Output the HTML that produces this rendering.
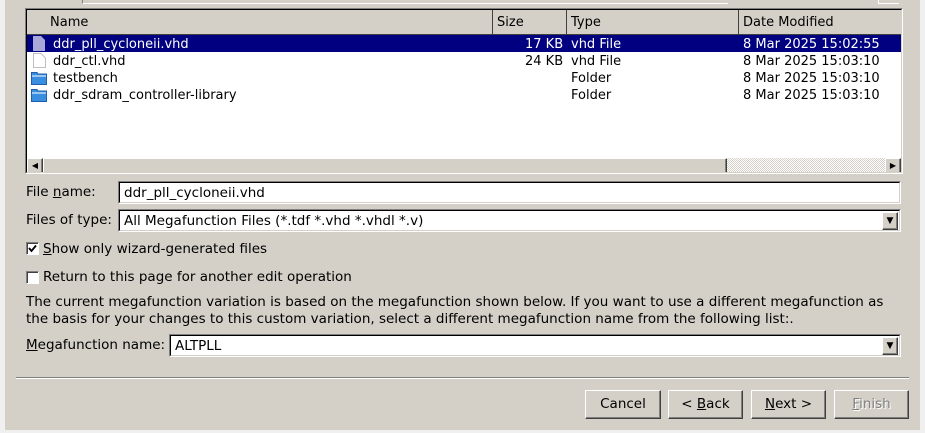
<!DOCTYPE html><html><head><style>
body{margin:0;width:925px;height:433px;background:#f0f0f0;position:relative;overflow:hidden;font-family:"DejaVu Sans","Liberation Sans",sans-serif;font-size:13.5px;color:#000}
.a{position:absolute}
.bg{left:5px;top:0;width:915px;height:430px;background:#d4d0c8}
.sunk{border-top:1px solid #808080;border-left:1px solid #808080;border-right:1px solid #fff;border-bottom:1px solid #fff;box-sizing:border-box}
.in{border-top:1px solid #000;border-left:1px solid #000;border-right:1px solid #d4d0c8;border-bottom:1px solid #d4d0c8;box-sizing:border-box;width:100%;height:100%;background:#fff}
.hd{background:#d4d0c8;border-right:1px solid #404040;border-bottom:1px solid #404040;box-sizing:border-box;height:25px;top:0;line-height:25px;padding-left:23px}
.row{height:17px;line-height:17px;white-space:nowrap}
.btn{background:#d4d0c8;border-top:1px solid #fff;border-left:1px solid #fff;border-right:1px solid #404040;border-bottom:1px solid #404040;box-sizing:border-box;text-align:center;line-height:27px;box-shadow:inset -1px -1px 0 #808080}
.dd{right:1px;top:1px;width:16px;height:18px}
.txt{line-height:21px;padding-left:4px;white-space:nowrap}
u{text-decoration:underline}
.cb{width:13px;height:13px;background:#fff;border-top:1px solid #808080;border-left:1px solid #808080;border-right:1px solid #fff;border-bottom:1px solid #fff;box-sizing:border-box;box-shadow:inset 1px 1px 0 #404040}
.list{font-size:13px}
</style></head><body>
<div class="a bg"></div>
<div class="a" style="left:82px;top:0;width:645px;height:3px;border-bottom:1px solid #fff;border-left:1px solid #808080;background:#d4d0c8"></div>
<div class="a" style="left:878px;top:0;width:20px;height:3px;border-bottom:1px solid #fff;border-left:1px solid #fff"></div>
<div class="a sunk list" style="left:25px;top:8px;width:878px;height:166px"><div class="in" style="position:relative;overflow:hidden">
<div class="a hd" style="left:0;width:466px">Name</div>
<div class="a hd" style="left:466px;width:74px;padding-left:4px">Size</div>
<div class="a hd" style="left:540px;width:172px;padding-left:4px">Type</div>
<div class="a hd" style="left:712px;width:170px;padding-left:4px">Date Modified</div>
<div class="a row" style="left:0;top:25px;width:874px;background:#000080;color:#fff"></div>
<div class="a" style="left:0;top:26px;width:874px">
 <div class="row" style="position:relative;color:#fff"><svg class="a" style="left:5px;top:0" width="14" height="15"><path d="M1 0H9L13 4V15H1Z" fill="#a8a8d8"/></svg><span class="a" style="left:26px">ddr_pll_cycloneii.vhd</span><span class="a" style="left:498px">17 KB</span><span class="a" style="left:544px">vhd File</span><span class="a" style="left:716px">8 Mar 2025 15:02:55</span></div>
 <div class="row" style="position:relative"><svg class="a" style="left:5px;top:0" width="14" height="15"><path d="M1.5 .5H9L13.5 5V14.5H1.5Z" fill="#fff" stroke="#c0c0c0"/></svg><span class="a" style="left:26px">ddr_ctl.vhd</span><span class="a" style="left:498px">24 KB</span><span class="a" style="left:544px">vhd File</span><span class="a" style="left:716px">8 Mar 2025 15:03:10</span></div>
 <div class="row" style="position:relative"><svg class="a" style="left:4px;top:1px" width="16" height="14"><path d="M.5 1.5H6L7 3H15.5V13.5H.5Z" fill="#3a8ee0" stroke="#1d5fae"/><rect x="1" y="4" width="14" height="2" fill="#9cc8f0"/></svg><span class="a" style="left:26px">testbench</span><span class="a" style="left:544px">Folder</span><span class="a" style="left:716px">8 Mar 2025 15:03:10</span></div>
 <div class="row" style="position:relative"><svg class="a" style="left:4px;top:1px" width="16" height="14"><path d="M.5 1.5H6L7 3H15.5V13.5H.5Z" fill="#3a8ee0" stroke="#1d5fae"/><rect x="1" y="4" width="14" height="2" fill="#9cc8f0"/></svg><span class="a" style="left:26px">ddr_sdram_controller-library</span><span class="a" style="left:544px">Folder</span><span class="a" style="left:716px">8 Mar 2025 15:03:10</span></div>
</div>
<div class="a" style="left:0;top:148px;width:874px;height:16px;background:repeating-conic-gradient(#d4d0c8 0 25%,#fff 0 50%) 0 0/2px 2px"></div>
<div class="a btn" style="left:0;top:148px;width:16px;height:16px;line-height:14px;font-size:8px">◀</div>
<div class="a btn" style="left:16px;top:148px;width:684px;height:16px"></div>
<div class="a btn" style="left:858px;top:148px;width:16px;height:16px;line-height:14px;font-size:8px">▶</div>
</div></div>
<div class="a" style="left:26px;top:184px">File <u>n</u>ame:</div>
<div class="a sunk" style="left:118px;top:181px;width:783px;height:23px"><div class="in txt">ddr_pll_cycloneii.vhd</div></div>
<div class="a" style="left:26px;top:212px">Files of type:</div>
<div class="a sunk" style="left:118px;top:209px;width:783px;height:23px"><div class="in txt" style="position:relative">All Megafunction Files (*.tdf *.vhd *.vhdl *.v)<div class="a btn dd" style="line-height:16px;font-size:9px;padding:0">▼</div></div></div>
<div class="a cb" style="left:26px;top:242px"><svg class="a" style="left:1px;top:1px" width="9" height="9"><path d="M1 4L3.5 7L8 1.5" stroke="#000" stroke-width="1.8" fill="none"/></svg></div>
<div class="a" style="left:43px;top:241px"><u>S</u>how only wizard-generated files</div>
<div class="a cb" style="left:26px;top:271px"></div>
<div class="a" style="left:43px;top:269px">Return to this page for another edit operation</div>
<div class="a" style="left:26px;top:294px;line-height:17px;white-space:nowrap">The current megafunction variation is based on the megafunction shown below. If you want to use a different megafunction as<br>the basis for your changes to this custom variation, select a different megafunction name from the following list:.</div>
<div class="a" style="left:26px;top:337px"><u>M</u>egafunction name:</div>
<div class="a sunk" style="left:169px;top:334px;width:732px;height:23px"><div class="in txt" style="position:relative">ALTPLL<div class="a btn dd" style="line-height:16px;font-size:9px;padding:0">▼</div></div></div>
<div class="a" style="left:16px;top:377px;width:893px;height:1px;background:#808080;border-bottom:1px solid #fff"></div>
<div class="a btn" style="left:585px;top:390px;width:76px;height:29px">Cancel</div>
<div class="a btn" style="left:668px;top:390px;width:75px;height:29px">&lt; <u>B</u>ack</div>
<div class="a btn" style="left:751px;top:390px;width:75px;height:29px"><u>N</u>ext &gt;</div>
<div class="a btn" style="left:834px;top:390px;width:75px;height:29px;color:#808080;text-shadow:1px 1px 0 #fff"><u>F</u>inish</div>
</body></html>
